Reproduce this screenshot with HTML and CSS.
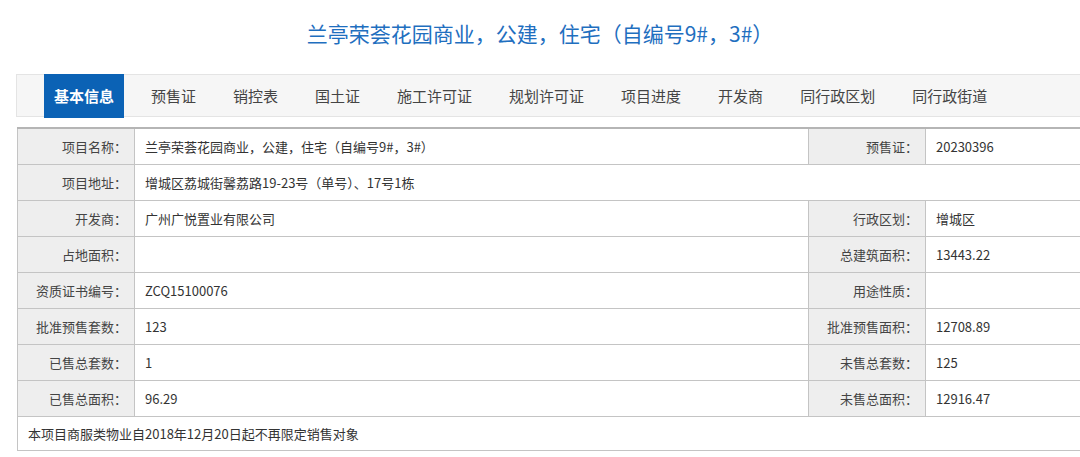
FILE: index.html
```html
<!DOCTYPE html>
<html lang="zh-CN">
<head>
<meta charset="utf-8">
<title>兰亭荣荟花园</title>
<link rel="stylesheet" href="styles.css">
</head>
<body>
<h1 class="title">兰亭荣荟花园商业，公建，住宅（自编号9#，3#）</h1>
<nav class="tabs">
  <a class="tab active">基本信息</a>
  <a class="tab">预售证</a>
  <a class="tab">销控表</a>
  <a class="tab">国土证</a>
  <a class="tab">施工许可证</a>
  <a class="tab">规划许可证</a>
  <a class="tab">项目进度</a>
  <a class="tab">开发商</a>
  <a class="tab">同行政区划</a>
  <a class="tab">同行政街道</a>
</nav>
<table class="info">
  <colgroup>
    <col class="c-label"><col class="c-value"><col class="c-label"><col>
  </colgroup>
  <tr class="first">
    <th>项目名称：</th><td>兰亭荣荟花园商业，公建，住宅（自编号9#，3#）</td>
    <th>预售证：</th><td>20230396</td>
  </tr>
  <tr>
    <th>项目地址：</th><td colspan="3">增城区荔城街馨荔路19-23号（单号）、17号1栋</td>
  </tr>
  <tr>
    <th>开发商：</th><td>广州广悦置业有限公司</td>
    <th>行政区划：</th><td>增城区</td>
  </tr>
  <tr>
    <th>占地面积：</th><td></td>
    <th>总建筑面积：</th><td>13443.22</td>
  </tr>
  <tr>
    <th>资质证书编号：</th><td>ZCQ15100076</td>
    <th>用途性质：</th><td></td>
  </tr>
  <tr>
    <th>批准预售套数：</th><td>123</td>
    <th>批准预售面积：</th><td>12708.89</td>
  </tr>
  <tr>
    <th>已售总套数：</th><td>1</td>
    <th>未售总套数：</th><td>125</td>
  </tr>
  <tr>
    <th>已售总面积：</th><td>96.29</td>
    <th>未售总面积：</th><td>12916.47</td>
  </tr>
  <tr class="note">
    <td colspan="4">本项目商服类物业自2018年12月20日起不再限定销售对象</td>
  </tr>
</table>
</body>
</html>
```
FILE: styles.css
```css
html, body {
  margin: 0;
  padding: 0;
  overflow: hidden;
  background: #ffffff;
}
body {
  font-family: "Noto Sans CJK SC", "Noto Sans", "Liberation Sans", sans-serif;
  color: #333333;
  width: 1080px;
}
.title {
  margin: 0;
  padding-top: 20px;
  font-size: 21px;
  line-height: 26px;
  font-weight: normal;
  color: #1f6fbf;
  text-align: center;
}
.tabs {
  margin: 28px 0 0 16px;
  width: 1064px;
  height: 41px;
  background: #f6f6f6;
  border: 1px solid #e4e4e4;
  border-right: none;
  display: flex;
  align-items: center;
  gap: 37px;
  padding-left: 27px;
  box-sizing: content-box;
  box-sizing: border-box;
  height: 43px;
  overflow: visible;
}
.tab {
  font-size: 15px;
  color: #444444;
  line-height: 20px;
  white-space: nowrap;
}
.tab.active {
  background: #0b62b5;
  color: #ffffff;
  font-weight: bold;
  align-self: flex-start;
  height: 44px;
  line-height: 44px;
  margin-top: -1px;
  padding: 0 10px;
  margin-right: -10px;
}
.info {
  margin: 10px 0 0 17px;
  width: 1063px;
  border-collapse: collapse;
  table-layout: fixed;
  font-size: 13px;
  border-top: 2px solid #b5b5b5;
}
.c-label { width: 117px; }
.c-value { width: 674px; }
.info th, .info td {
  height: 35px;
  padding: 0;
  border: 1px solid #c4c4c4;
  white-space: nowrap;
}
.info td:last-child {
  border-right: none;
}
.info th {
  background: #eeeeee;
  color: #444444;
  font-weight: normal;
  text-align: right;
  padding-right: 7px;
}
.info td {
  text-align: left;
  padding-left: 10px;
  color: #333333;
}
.info tr.note td {
  height: 33px;
}
```
